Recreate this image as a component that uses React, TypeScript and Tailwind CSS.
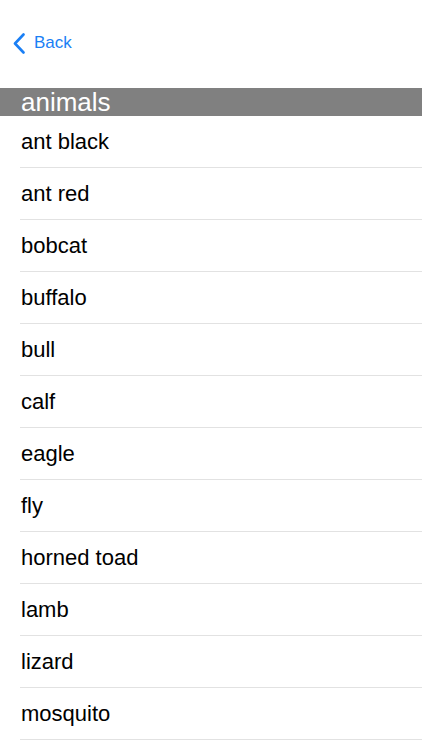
import React from "react";

const items = [
  "ant black",
  "ant red",
  "bobcat",
  "buffalo",
  "bull",
  "calf",
  "eagle",
  "fly",
  "horned toad",
  "lamb",
  "lizard",
  "mosquito",
];

export default function App() {
  return (
    <div
      className="w-[422px] h-[750px] bg-white overflow-hidden"
      style={{ fontFamily: '"Liberation Sans", Arial, sans-serif' }}
    >
      <div className="h-[88px] flex items-start pt-[31px] pl-[13px]">
        <button className="flex items-center gap-[9px] text-[#1a7ff5]">
          <svg width="12" height="21" viewBox="0 0 12 21" fill="none">
            <path d="M10.5 1.5L2 10.5L10.5 19.5" stroke="#1a7ff5" strokeWidth="2.6" strokeLinecap="round" strokeLinejoin="round" />
          </svg>
          <span className="text-[17px] leading-[24px]">Back</span>
        </button>
      </div>
      <div className="h-[28px] bg-[#808080] flex items-center pl-[21px]">
        <span className="text-white text-[26px] leading-[28px]">animals</span>
      </div>
      <ul>
        {items.map((it) => (
          <li key={it} className="pl-[20px]">
            <div className="h-[52px] flex items-center border-b border-[#e2e2e2] pl-[1px]">
              <span className="text-black text-[22px] leading-[26px] mt-[1px]">{it}</span>
            </div>
          </li>
        ))}
      </ul>
    </div>
  );
}
